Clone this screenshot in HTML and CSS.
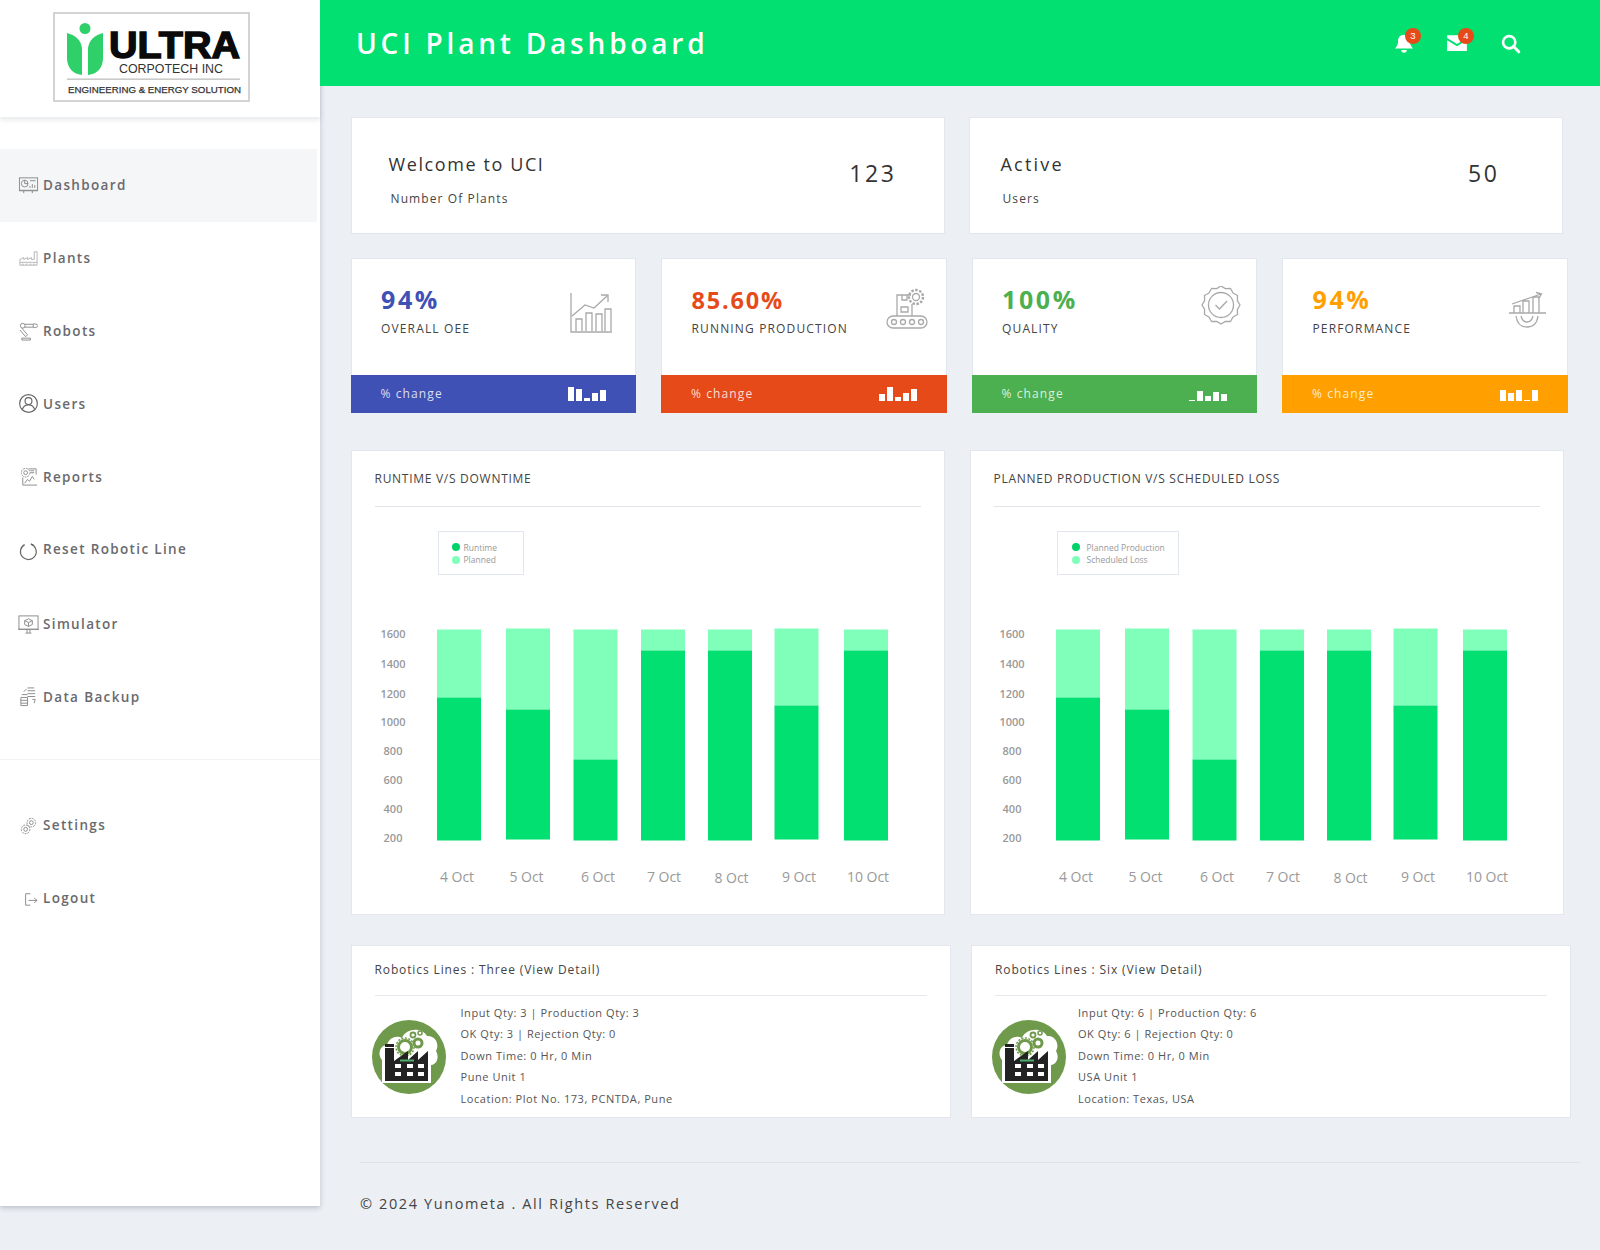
FILE: index.html
```html
<!DOCTYPE html>
<html lang="en">
<head>
<meta charset="utf-8">
<title>UCI Plant Dashboard</title>
<link rel="stylesheet" href="styles.css">
</head>
<body>
<div class="app">
  <aside class="sidebar">
    <div class="brand">
      <svg class="logo" viewBox="0 0 197 90" width="197" height="90">
        <rect x="1" y="1" width="195" height="88" fill="#fff" stroke="#c9c9c9" stroke-width="1.6"/>
        <circle cx="32" cy="16.5" r="5.5" fill="#2fd06a"/>
        <path d="M14 21 C22 23 28 28 29 36 L29 63 C19 62 14 55 14 46 Z" fill="#2fd06a"/>
        <path d="M50 21 C42 23 36 28 35 36 L35 63 C45 62 50 55 50 46 Z" fill="#2fd06a"/>
        <text class="logo-ultra" x="56" y="45.5" textLength="131" lengthAdjust="spacingAndGlyphs">ULTRA</text>
        <text class="logo-corp" x="66" y="60.5" textLength="104" lengthAdjust="spacingAndGlyphs">CORPOTECH INC</text>
        <rect x="14" y="66.5" width="173" height="1.3" fill="#bdbdbd"/>
        <text class="logo-sub" x="15" y="81" textLength="173" lengthAdjust="spacingAndGlyphs">ENGINEERING &amp; ENERGY SOLUTION</text>
      </svg>
    </div>
    <nav class="nav">
      <a class="nav-item is-active">
        <svg class="nav-icon" viewBox="0 0 22 22"><rect x="1.5" y="3" width="19" height="13"/><circle cx="7" cy="9" r="3.5"/><path d="M7 9V5.5M7 9h3.5M12.5 6h6M12.5 13.5v-2M15 13.5v-4M17.5 13.5v-3M1 16.5h20M6 19v-2.5M15 19v-2.5"/></svg>
        <span>Dashboard</span>
      </a>
      <a class="nav-item">
        <svg class="nav-icon nav-icon-soft" viewBox="0 0 22 22"><path d="M2 18V12l4-2v2l4-2v2l4-2v2h3V4h3v14ZM2 15h18M4 17h2M8 17h2M12 17h2M16 17h2"/></svg>
        <span>Plants</span>
      </a>
      <a class="nav-item">
        <svg class="nav-icon" viewBox="0 0 22 22"><circle cx="5" cy="6" r="2.5"/><path d="M7 4.5h9l0 3H7M16 4c2 0 4 .5 5 1.5M16 8c2 0 4-.5 5-1.5M4 8.5l6 7-2 2-6-7M4 19h9v2H4Z"/></svg>
        <span>Robots</span>
      </a>
      <a class="nav-item">
        <svg class="nav-icon nav-icon-dark" viewBox="0 0 22 22"><circle cx="11" cy="11" r="9.3"/><circle cx="11" cy="8.5" r="3.6"/><path d="M4.5 17.5c1-3.5 3.5-5 6.5-5s5.5 1.500 6.500 5"/></svg>
        <span>Users</span>
      </a>
      <a class="nav-item">
        <svg class="nav-icon" viewBox="0 0 22 22"><circle cx="8" cy="7" r="4.500" stroke-dasharray="2 1"/><circle cx="8" cy="7" r="2"/><path d="M11 3h8v6M13 5h4M13 7h4M5 12v8h15M7 18l3-4 2 2 3-5 2 3"/></svg>
        <span>Reports</span>
      </a>
      <a class="nav-item">
        <svg class="nav-icon nav-icon-dark nav-icon-low" viewBox="0 0 22 22"><path d="M13.500 3.300A8.300 8.300 0 1 1 7 3.800"/><path d="M13.500 3.300 L16.500 4.500"/></svg>
        <span>Reset Robotic Line</span>
      </a>
      <a class="nav-item nav-item-gap">
        <svg class="nav-icon" viewBox="0 0 22 22"><rect x="1" y="2" width="20" height="14"/><path d="M0 16h22M8 20h6M9.500 16v4M12.500 16v4M11 5l4 2v4l-4 2-4-2V7ZM7 7l4 2 4-2M11 9v4"/></svg>
        <span>Simulator</span>
      </a>
      <a class="nav-item">
        <svg class="nav-icon" viewBox="0 0 22 22"><path d="M10 2h7M10 5h8M10 8h8M10 11h8M15 14h3l-1 4M4 9h6M3 12h7M3 15h7M3 18h7M3 20.500h7M3 12v8.500M10 12v8.500M6 6l3-3"/></svg>
        <span>Data Backup</span>
      </a>
    </nav>
    <div class="nav-rule"></div>
    <nav class="nav nav-secondary">
      <a class="nav-item">
        <svg class="nav-icon" viewBox="0 0 22 22"><circle cx="14" cy="8" r="4.500" stroke-dasharray="2 1"/><circle cx="14" cy="8" r="2"/><circle cx="8" cy="15" r="4.500" stroke-dasharray="2 1"/><circle cx="8" cy="15" r="2"/></svg>
        <span>Settings</span>
      </a>
      <a class="nav-item">
        <svg class="nav-icon" viewBox="0 0 22 22"><path d="M13 6H8v12h5M11 13h9M17 10.500l3 2.500-3 2.500"/></svg>
        <span>Logout</span>
      </a>
    </nav>
  </aside>

  <div class="main">
    <header class="topbar">
      <h1 class="topbar-title">UCI Plant Dashboard</h1>
      <div class="topbar-actions">
        <div class="action">
          <svg viewBox="0 0 24 24" width="22" height="22"><path fill="#fff" d="M12 3c-4 0-6.500 3-6.500 7 0 4-1.500 6-3.500 8h20c-2-2-3.500-4-3.500-8 0-4-2.500-7-6.500-7ZM9 19.500a3 3 0 0 0 6 0Z"/></svg>
          <span class="badge">3</span>
        </div>
        <div class="action">
          <svg viewBox="0 0 24 20" width="22" height="18"><path fill="#fff" d="M1 1.500h22v3L12 11 1 4.500ZM1 7l11 6.500L23 7v12H1Z"/></svg>
          <span class="badge">4</span>
        </div>
        <div class="action">
          <svg viewBox="0 0 24 24" width="21" height="21"><circle cx="10.500" cy="10.500" r="7" fill="none" stroke="#fff" stroke-width="3"/><path d="M15.500 15.500l6 6" stroke="#fff" stroke-width="3.400" stroke-linecap="round"/></svg>
        </div>
      </div>
    </header>

    <main class="content">
      <section class="welcome-row">
        <article class="welcome">
          <div>
            <h2 class="welcome-title">Welcome to UCI</h2>
            <p class="welcome-sub">Number Of Plants</p>
          </div>
          <div class="welcome-num">123</div>
        </article>
        <article class="welcome welcome-alt">
          <div>
            <h2 class="welcome-title welcome-title-wide">Active</h2>
            <p class="welcome-sub">Users</p>
          </div>
          <div class="welcome-num">50</div>
        </article>
      </section>

      <section class="kpi-row">
        <article class="kpi kpi-blue">
          <div class="kpi-body">
            <div>
              <div class="kpi-value">94%</div>
              <div class="kpi-label">OVERALL OEE</div>
            </div>
            <svg class="kpi-icon" viewBox="0 0 50 50"><path d="M1 7v39h41M2 30l13-11 9 3 13-12M31 9h7v7M6 45V33h6v12M16 45V27h6v18M26 45V28h6v17M35 45V23h6v22"/></svg>
          </div>
          <div class="kpi-foot">
            <span>% change</span>
            <div class="spark"><i style="height:14px"></i><i style="height:12px"></i><i style="height:3px"></i><i style="height:8px"></i><i style="height:11px"></i></div>
          </div>
        </article>
        <article class="kpi kpi-red">
          <div class="kpi-body">
            <div>
              <div class="kpi-value kpi-value-low">85.60%</div>
              <div class="kpi-label">RUNNING PRODUCTION</div>
            </div>
            <svg class="kpi-icon" viewBox="0 0 50 50"><circle cx="35" cy="11" r="7" stroke-dasharray="2.500 1.500" stroke-width="2.400"/><circle cx="35" cy="11" r="3.500"/><path d="M30 9H16v21M31 18v12M20 21h7v5h-7ZM21 9v5h5V9"/><rect x="6" y="30" width="40" height="12" rx="6"/><circle cx="13" cy="36" r="2.500"/><circle cx="22" cy="36" r="2.500"/><circle cx="31" cy="36" r="2.500"/><circle cx="40" cy="36" r="2.500"/></svg>
          </div>
          <div class="kpi-foot">
            <span>% change</span>
            <div class="spark"><i style="height:7px"></i><i style="height:14px"></i><i style="height:4px"></i><i style="height:8px"></i><i style="height:12px"></i></div>
          </div>
        </article>
        <article class="kpi kpi-green">
          <div class="kpi-body">
            <div>
              <div class="kpi-value">100%</div>
              <div class="kpi-label">QUALITY</div>
            </div>
            <svg class="kpi-icon" viewBox="0 0 50 50"><g transform="translate(30 19)"><polygon stroke-linejoin="round" points="19,0 16.400,4.400 16.500,9.500 12,12 9.500,16.500 4.400,16.400 0,19 -4.400,16.400 -9.500,16.500 -12,12 -16.500,9.500 -16.400,4.400 -19,0 -16.400,-4.400 -16.500,-9.500 -12,-12 -9.500,-16.500 -4.400,-16.400 0,-19 4.400,-16.400 9.500,-16.500 12,-12 16.500,-9.500 16.400,-4.400"/><circle r="12.500"/><path d="M-5.500 0l4 4 7.500-8"/></g></svg>
          </div>
          <div class="kpi-foot">
            <span>% change</span>
            <div class="spark"><i style="height:1px"></i><i style="height:10px"></i><i style="height:5px"></i><i style="height:9px"></i><i style="height:7px"></i></div>
          </div>
        </article>
        <article class="kpi kpi-amber">
          <div class="kpi-body">
            <div>
              <div class="kpi-value">94%</div>
              <div class="kpi-label">PERFORMANCE</div>
            </div>
            <svg class="kpi-icon" viewBox="0 0 50 50"><path d="M10 18l29-10M34 6.500l5.500 1.500-3 5M7 27h37M12 27v-7h6v7M21 27V15h6v12M31 27V11h6v16M14 30c1 8 6 11 11 11s10-3 11-11M19 30c1 4 3 6 6 6s5-2 6-6"/></svg>
          </div>
          <div class="kpi-foot">
            <span>% change</span>
            <div class="spark"><i style="height:11px"></i><i style="height:8px"></i><i style="height:11px"></i><i style="height:1px"></i><i style="height:11px"></i></div>
          </div>
        </article>
      </section>

      <section class="chart-row">
        <article class="panel">
          <h3 class="panel-title">RUNTIME V/S DOWNTIME</h3>
          <div class="legend legend-a">
            <div class="legend-item"><i class="dot dot-dark"></i>Runtime</div>
            <div class="legend-item"><i class="dot dot-light"></i>Planned</div>
          </div>
          <svg class="chart" viewBox="0 0 594 340" width="594" height="340">
            <g class="bars-light">
              <rect x="86" y="55.500" width="44" height="68"/><rect x="155" y="54.500" width="44" height="81"/><rect x="222.500" y="55.500" width="44" height="130"/><rect x="290" y="55.500" width="44" height="21"/><rect x="357" y="55.500" width="44" height="21"/><rect x="423.500" y="54.500" width="44" height="77"/><rect x="493" y="55.500" width="44" height="21"/>
            </g>
            <g class="bars-dark">
              <rect x="86" y="123.500" width="44" height="143"/><rect x="155" y="135.500" width="44" height="130"/><rect x="222.500" y="185.500" width="44" height="81"/><rect x="290" y="76.500" width="44" height="190"/><rect x="357" y="76.500" width="44" height="190"/><rect x="423.500" y="131.500" width="44" height="134"/><rect x="493" y="76.500" width="44" height="190"/>
            </g>
            <g class="y-axis">
              <text x="42" y="63.500">1600</text><text x="42" y="94">1400</text><text x="42" y="123.500">1200</text><text x="42" y="152">1000</text><text x="42" y="181">800</text><text x="42" y="210">600</text><text x="42" y="239">400</text><text x="42" y="268">200</text>
            </g>
            <g class="x-axis">
              <text x="106" y="307.500">4 Oct</text><text x="175.500" y="307.500">5 Oct</text><text x="247" y="308">6 Oct</text><text x="313" y="307.500">7 Oct</text><text x="380.500" y="309">8 Oct</text><text x="448" y="308">9 Oct</text><text x="517" y="308">10 Oct</text>
            </g>
          </svg>
        </article>
        <article class="panel">
          <h3 class="panel-title">PLANNED PRODUCTION V/S SCHEDULED LOSS</h3>
          <div class="legend legend-b">
            <div class="legend-item"><i class="dot dot-dark"></i>Planned Production</div>
            <div class="legend-item"><i class="dot dot-light"></i>Scheduled Loss</div>
          </div>
          <svg class="chart" viewBox="0 0 594 340" width="594" height="340">
            <g class="bars-light">
              <rect x="86" y="55.500" width="44" height="68"/><rect x="155" y="54.500" width="44" height="81"/><rect x="222.500" y="55.500" width="44" height="130"/><rect x="290" y="55.500" width="44" height="21"/><rect x="357" y="55.500" width="44" height="21"/><rect x="423.500" y="54.500" width="44" height="77"/><rect x="493" y="55.500" width="44" height="21"/>
            </g>
            <g class="bars-dark">
              <rect x="86" y="123.500" width="44" height="143"/><rect x="155" y="135.500" width="44" height="130"/><rect x="222.500" y="185.500" width="44" height="81"/><rect x="290" y="76.500" width="44" height="190"/><rect x="357" y="76.500" width="44" height="190"/><rect x="423.500" y="131.500" width="44" height="134"/><rect x="493" y="76.500" width="44" height="190"/>
            </g>
            <g class="y-axis">
              <text x="42" y="63.500">1600</text><text x="42" y="94">1400</text><text x="42" y="123.500">1200</text><text x="42" y="152">1000</text><text x="42" y="181">800</text><text x="42" y="210">600</text><text x="42" y="239">400</text><text x="42" y="268">200</text>
            </g>
            <g class="x-axis">
              <text x="106" y="307.500">4 Oct</text><text x="175.500" y="307.500">5 Oct</text><text x="247" y="308">6 Oct</text><text x="313" y="307.500">7 Oct</text><text x="380.500" y="309">8 Oct</text><text x="448" y="308">9 Oct</text><text x="517" y="308">10 Oct</text>
            </g>
          </svg>
        </article>
      </section>

      <section class="line-row">
        <article class="line-card">
          <h3 class="line-title">Robotics Lines : Three (View Detail)</h3>
          <div class="line-body">
            <svg class="plant" viewBox="0 0 74 74" width="74" height="74">
              <circle cx="37" cy="37" r="37" fill="#6f9a4b"/>
              <path d="M10 63V40C5 34 8 25 15 25C17 17 25 15 30 18C34 8 50 7 55 16C63 15 68 24 64 31C68 38 64 45 59 45V63Z" fill="#fff"/>
              <circle cx="33" cy="27" r="6.500" fill="none" stroke="#6f9a4b" stroke-width="3"/>
              <circle cx="33" cy="27" r="9" fill="none" stroke="#6f9a4b" stroke-width="1.500" stroke-dasharray="2 1.500"/>
              <circle cx="46" cy="23" r="4" fill="none" stroke="#6f9a4b" stroke-width="3"/>
              <circle cx="41" cy="15" r="2.500" fill="none" stroke="#6f9a4b" stroke-width="1.800"/>
              <circle cx="48" cy="13" r="2" fill="none" stroke="#6f9a4b" stroke-width="1.500"/>
              <path d="M13 61V24h9v17l14-10v9l10-9v9l10-9v30Z" fill="#222"/>
              <rect x="13" y="27" width="9" height="1" fill="#fff"/>
              <g fill="#fff"><rect x="23" y="44" width="6" height="4"/><rect x="35" y="44" width="6" height="4"/><rect x="46" y="44" width="6" height="4"/><rect x="23" y="52" width="6" height="4"/><rect x="35" y="52" width="6" height="4"/><rect x="46" y="52" width="6" height="4"/></g>
              <rect x="28" y="39.500" width="14" height="2" fill="#4fae6c"/>
            </svg>
            <div class="line-info">
              <p>Input Qty: 3 | Production Qty: 3</p>
              <p>OK Qty: 3 | Rejection Qty: 0</p>
              <p>Down Time: 0 Hr, 0 Min</p>
              <p>Pune Unit 1</p>
              <p>Location: Plot No. 173, PCNTDA, Pune</p>
            </div>
          </div>
        </article>
        <article class="line-card line-card-alt">
          <h3 class="line-title">Robotics Lines : Six (View Detail)</h3>
          <div class="line-body">
            <svg class="plant" viewBox="0 0 74 74" width="74" height="74">
              <circle cx="37" cy="37" r="37" fill="#6f9a4b"/>
              <path d="M10 63V40C5 34 8 25 15 25C17 17 25 15 30 18C34 8 50 7 55 16C63 15 68 24 64 31C68 38 64 45 59 45V63Z" fill="#fff"/>
              <circle cx="33" cy="27" r="6.500" fill="none" stroke="#6f9a4b" stroke-width="3"/>
              <circle cx="33" cy="27" r="9" fill="none" stroke="#6f9a4b" stroke-width="1.500" stroke-dasharray="2 1.500"/>
              <circle cx="46" cy="23" r="4" fill="none" stroke="#6f9a4b" stroke-width="3"/>
              <circle cx="41" cy="15" r="2.500" fill="none" stroke="#6f9a4b" stroke-width="1.800"/>
              <circle cx="48" cy="13" r="2" fill="none" stroke="#6f9a4b" stroke-width="1.500"/>
              <path d="M13 61V24h9v17l14-10v9l10-9v9l10-9v30Z" fill="#222"/>
              <rect x="13" y="27" width="9" height="1" fill="#fff"/>
              <g fill="#fff"><rect x="23" y="44" width="6" height="4"/><rect x="35" y="44" width="6" height="4"/><rect x="46" y="44" width="6" height="4"/><rect x="23" y="52" width="6" height="4"/><rect x="35" y="52" width="6" height="4"/><rect x="46" y="52" width="6" height="4"/></g>
              <rect x="28" y="39.500" width="14" height="2" fill="#4fae6c"/>
            </svg>
            <div class="line-info">
              <p>Input Qty: 6 | Production Qty: 6</p>
              <p>OK Qty: 6 | Rejection Qty: 0</p>
              <p>Down Time: 0 Hr, 0 Min</p>
              <p>USA Unit 1</p>
              <p>Location: Texas, USA</p>
            </div>
          </div>
        </article>
      </section>

      <footer class="footer">© 2024 Yunometa . All Rights Reserved</footer>
    </main>
  </div>
</div>
</body>
</html>
```

FILE: styles.css
```css
* { box-sizing: border-box; }
html, body { margin: 0; padding: 0; }
body {
  background: #ecf0f5;
  font-family: "Open Sans", "Noto Sans", sans-serif;
  color: #444;
  height: 1250px;
  overflow: hidden;
}
h1, h2, h3, p { margin: 0; font-weight: 400; }

.app { display: flex; align-items: flex-start; width: 1600px; }

/* sidebar */
.sidebar {
  width: 320px;
  height: 1206px;
  flex: none;
  background: #fff;
  box-shadow: 0 2px 5px rgba(60, 70, 90, .28);
}
.brand {
  height: 117px;
  padding: 12px 0 0 53px;
  box-shadow: 0 3px 5px rgba(60, 70, 90, .12);
}
.logo { display: block; }
.logo-ultra { font: 700 36px "Liberation Sans", sans-serif; fill: #0a0a0a; stroke: #0a0a0a; stroke-width: 1.4px; }
.logo-corp { font: 400 13.5px "Liberation Sans", sans-serif; fill: #333; }
.logo-sub { font: 400 9.5px "Liberation Sans", sans-serif; fill: #333; stroke: #333; stroke-width: .25px; }

.nav { padding-top: 32px; }
.nav-secondary { padding-top: 28.700px; }
.nav-item {
  display: flex;
  align-items: center;
  gap: 4px;
  width: 317px;
  height: 72.800px;
  padding-left: 18px;
  font-size: 13.500px;
  font-weight: 600;
  letter-spacing: 1.350px;
  color: #6a6a6e;
}
.nav-item-gap { margin-top: 2px; }
.nav-item.is-active { background: #f5f6f8; }
.nav-icon {
  width: 21px;
  height: 21px;
  flex: none;
  fill: none;
  stroke: #8a8a8a;
  stroke-width: 1;
}
.nav-icon-soft { stroke: #b5b5b5; }
.nav-icon-dark { stroke: #666; stroke-width: 1.2; }
.nav-icon-low { margin-top: 5px; }
.nav-rule { height: 1px; margin-top: 26px; background: #f3f3f3; }

/* top bar */
.main { flex: 1; min-width: 0; }
.topbar {
  height: 86px;
  background: #01e070;
  display: flex;
  align-items: center;
  justify-content: space-between;
  padding: 0 79px 0 36px;
}
.topbar-title {
  font-size: 28px;
  font-weight: 600;
  letter-spacing: 3.800px;
  color: #fff;
}
.topbar-actions { display: flex; align-items: center; gap: 31px; }
.action { position: relative; display: flex; width: 22px; height: 22px; align-items: center; justify-content: center; }
.badge {
  position: absolute;
  top: -4px;
  right: -6px;
  width: 16px;
  height: 16px;
  border-radius: 50%;
  background: #e64a19;
  color: #fff;
  font: 400 9.500px/16px "Liberation Sans", sans-serif;
  text-align: center;
}

/* content */
.content { padding: 31px 0 0 30.500px; }
.welcome-row {
  display: grid;
  grid-template-columns: 594px 594px;
  gap: 24px;
}
.welcome {
  height: 117px;
  background: #fff;
  border: 1px solid #e2e6ef;
  display: flex;
  justify-content: space-between;
  align-items: center;
  padding: 0 47px 0 37px;
}
.welcome-alt { padding: 0 62px 0 31px; }
.welcome-title { font-size: 18px; letter-spacing: 1.600px; color: #333; margin-top: 7px; }
.welcome-title-wide { letter-spacing: 2.200px; }
.welcome-sub { font-size: 12px; letter-spacing: 1.100px; color: #444; margin: 14px 0 0 2px; }
.welcome-num { font-size: 23px; letter-spacing: 2.600px; color: #333; margin-top: -6px; }

.kpi-row {
  display: grid;
  grid-template-columns: repeat(4, 285.500px);
  gap: 25px;
  margin-top: 24px;
}
.kpi {
  height: 155px;
  background: #fff;
  border: 1px solid #e2e6ef;
  border-bottom: 0;
  display: flex;
  flex-direction: column;
}
.kpi-body {
  flex: 1;
  display: flex;
  justify-content: space-between;
  align-items: flex-start;
  padding: 25px 15px 0 29.500px;
}
.kpi-value { font-size: 25px; line-height: 30px; font-weight: 700; letter-spacing: 2.600px; }
.kpi-value-low { margin-top: 1px; margin-bottom: -1px; font-size: 23.500px; letter-spacing: 1.800px; }
.kpi-icon-top { margin-top: 2px; }
.kpi-icon {
  width: 50px;
  height: 50px;
  margin-top: 2px;
  fill: none;
  stroke: #a9a9a9;
  stroke-width: 1.300;
}
.kpi-label { font-size: 12px; line-height: 16px; letter-spacing: 1.150px; color: #444; margin-top: 7px; }
.kpi-foot {
  height: 38px;
  margin: 0 -1px;
  padding: 0 30px 2px;
  display: flex;
  align-items: center;
  justify-content: space-between;
  color: rgba(255, 255, 255, .82);
  font-size: 12px;
  letter-spacing: 1.100px;
}
.spark { display: flex; align-items: flex-end; gap: 2px; height: 16px; margin-top: -1px; }
.spark i { display: block; width: 6px; background: #fff; }
.kpi-blue .kpi-value { color: #3f51b5; }
.kpi-blue .kpi-foot { background: #3f51b5; }
.kpi-red .kpi-value { color: #e64a19; }
.kpi-red .kpi-foot { background: #e64a19; }
.kpi-green .kpi-value { color: #4caf50; }
.kpi-green .kpi-foot { background: #4caf50; }
.kpi-amber .kpi-value { color: #ffa000; }
.kpi-amber .kpi-foot { background: #ffa000; }

.chart-row {
  display: grid;
  grid-template-columns: 594px 594px;
  gap: 25px;
  margin-top: 37px;
}
.panel {
  height: 465px;
  background: #fff;
  border: 1px solid #e2e6ef;
  position: relative;
}
.panel-title {
  margin: 0 23px;
  height: 56px;
  line-height: 55px;
  border-bottom: 1px solid #e2e4ea;
  font-size: 12px;
  letter-spacing: .720px;
  color: #444;
}
.legend {
  margin: 24px 0 -1px 86px;
  height: 44px;
  background: #fff;
  border: 1px solid #e2e6ef;
  padding: 9px 0 0 13px;
  font-size: 8.500px;
  color: #999;
}
.legend-a { width: 86px; }
.legend-b { width: 122px; padding-left: 14px; }
.legend-item { display: flex; align-items: center; gap: 4px; height: 12.500px; }
.legend-b .legend-item { gap: 7px; }
.dot { display: block; width: 8px; height: 8px; border-radius: 50%; }
.dot-dark { background: #00d26a; }
.dot-light { background: #80ffbb; }
.chart { display: block; margin: 0 -1px; }
.bars-light rect { fill: #80ffbb; }
.bars-dark rect { fill: #01e070; }
.y-axis text { font-size: 11px; fill: #999; text-anchor: middle; font-weight: 600; }
.x-axis text { font-size: 14px; fill: #999; text-anchor: middle; font-weight: 500; }

.line-row {
  display: grid;
  grid-template-columns: 600px 600px;
  gap: 20.500px;
  margin-top: 30px;
}
.line-card {
  height: 173px;
  background: #fff;
  border: 1px solid #e2e6ef;
  padding: 0 23px;
}
.line-title {
  height: 50px;
  line-height: 48px;
  border-bottom: 1px solid #e6e8ee;
  font-size: 12px;
  letter-spacing: .880px;
  color: #444;
}
.line-body { display: flex; align-items: flex-start; gap: 15px; padding-top: 6px; margin-left: -3px; }
.line-card-alt .line-body { gap: 12px; }
.plant { flex: none; margin-top: 18px; }
.line-info { font-size: 11px; line-height: 21.400px; letter-spacing: .550px; color: #555; }

.footer {
  width: 1220px;
  margin: 44px 0 0 9.500px;
  padding-top: 31px;
  border-top: 1px solid #dfe2e8;
  font-size: 14.500px;
  letter-spacing: 1.600px;
  color: #444;
}
```
